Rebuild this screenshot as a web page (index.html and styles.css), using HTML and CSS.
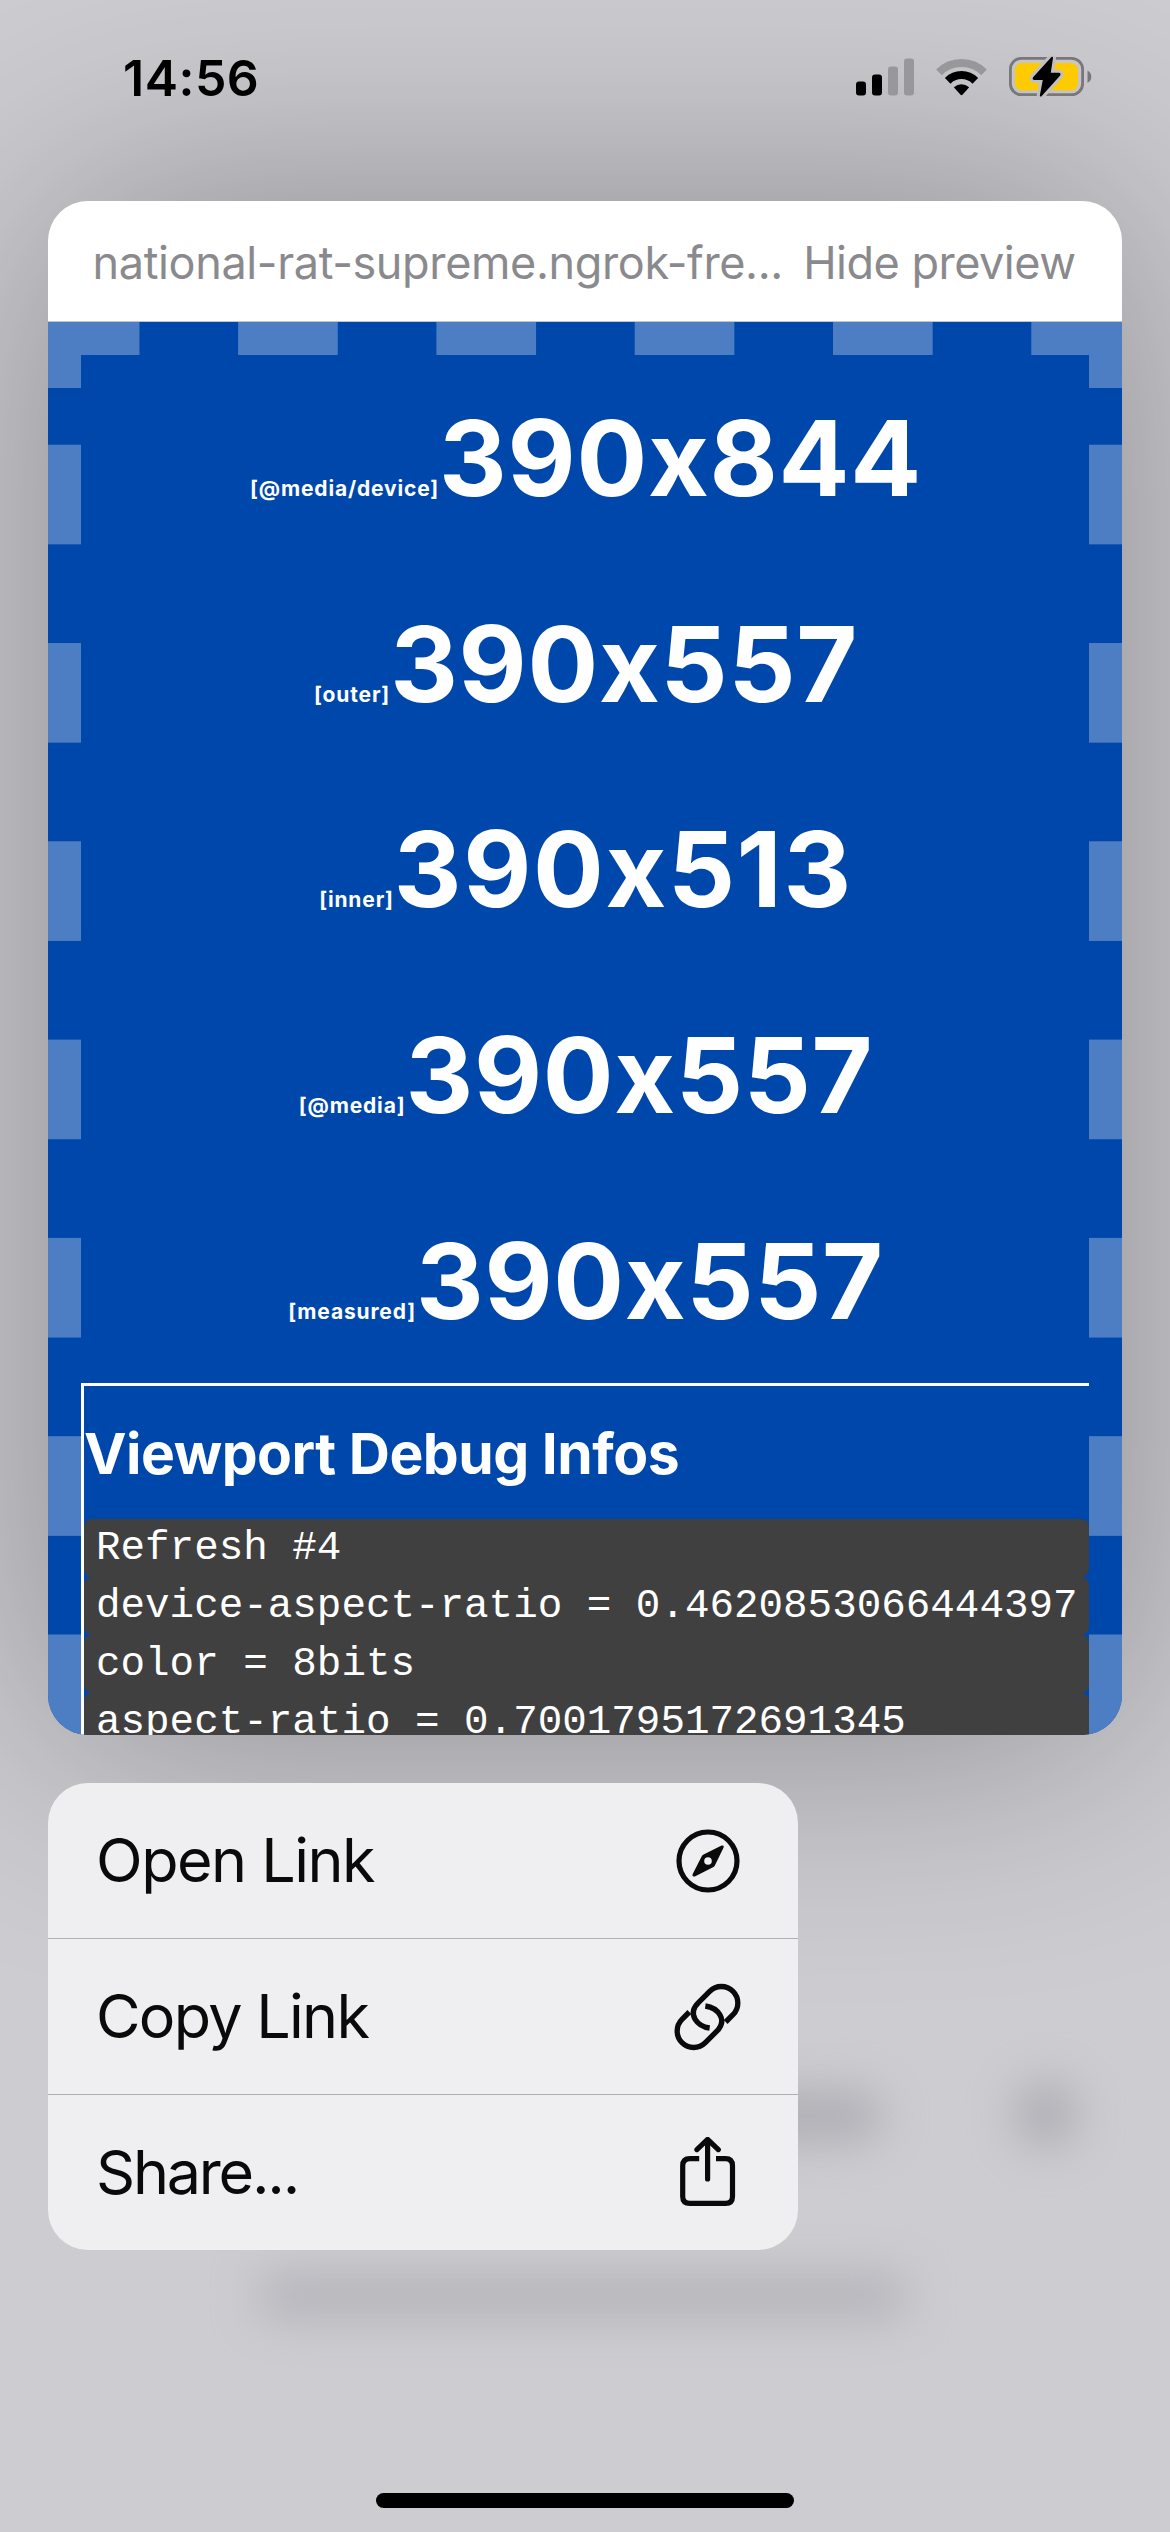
FILE: index.html
```html
<!DOCTYPE html>
<html lang="en">
<head>
<meta charset="utf-8">
<title>Link preview</title>
<link rel="stylesheet" href="styles.css">
</head>
<body>
<div class="screen">
  <div class="backdrop">
    <span class="blob blob-label"></span>
    <span class="blob blob-dot"></span>
    <span class="blob blob-caption"></span>
  </div>

  <header class="status">
    <span class="time">14:56</span>
    <span class="indicators">
      <svg class="signal" width="58" height="38" viewBox="0 0 58 38">
        <rect x="0" y="23.5" width="10" height="14" rx="3"/>
        <rect x="16" y="16.5" width="10" height="21" rx="3"/>
        <rect class="dim" x="32" y="8.5" width="10" height="29" rx="3"/>
        <rect class="dim" x="48" y="0.5" width="10" height="37" rx="3"/>
      </svg>
      <svg class="wifi" width="51" height="38" viewBox="0 0 51 38">
        <path class="arc dim-arc" d="M3 14.3 A32 32 0 0 1 48 14.3"/>
        <path class="arc" d="M11.7 22.8 A19.6 19.6 0 0 1 39.3 22.8"/>
        <path d="M17.8 29.3 Q25.5 23 33.2 29.3 L26.7 36.6 Q25.5 37.8 24.3 36.6 Z"/>
      </svg>
      <svg class="battery" width="83" height="42" viewBox="0 0 83 42">
        <rect class="shell" x="1.4" y="2.3" width="72.2" height="36.4" rx="11"/>
        <rect class="charge" x="6" y="7" width="63" height="27.5" rx="6.5"/>
        <path class="nub" d="M78.5 14.5 Q82.3 16.5 82.3 20.8 Q82.3 25 78.5 27 Z"/>
        <path class="bolt-gap" d="M43 1.8 L24.8 22 Q24.2 23 25.4 23 L35 23 L31.8 39.6 L50.4 18.8 Q51 17.8 49.8 17.8 L40.6 17.8 Z"/>
        <path class="bolt" d="M43 1.8 L24.8 22 Q24.2 23 25.4 23 L35 23 L31.8 39.6 L50.4 18.8 Q51 17.8 49.8 17.8 L40.6 17.8 Z"/>
      </svg>
    </span>
  </header>

  <section class="preview">
    <div class="preview-bar">
      <span class="url">national-rat-supreme.ngrok-fre...</span>
      <span class="hide">Hide preview</span>
    </div>
    <div class="page">
      <div class="size"><small>[@media/device]</small><b>390x844</b></div>
      <div class="size"><small>[outer]</small><b>390x557</b></div>
      <div class="size size-inner"><small>[inner]</small><b>390x513</b></div>
      <div class="size"><small>[@media]</small><b>390x557</b></div>
      <div class="size"><small>[measured]</small><b>390x557</b></div>
      <div class="debug">
        <h2>Viewport Debug Infos</h2>
        <code>Refresh #4</code>
        <code>device-aspect-ratio = 0.4620853066444397</code>
        <code>color = 8bits</code>
        <code>aspect-ratio = 0.7001795172691345</code>
      </div>
    </div>
  </section>

  <nav class="menu">
    <a class="item"><span class="t-open">Open Link</span>
      <svg width="72" height="72" viewBox="0 0 72 72">
        <circle class="line" cx="36" cy="36" r="29"/>
        <path fill-rule="evenodd" d="M49.6 20.6 Q52.4 19.8 51.6 22.6 L43 40.2 Q42.3 41.6 41 42.3 L22.8 51.4 Q19.8 52.2 20.6 49.2 L29.6 31.6 Q30.3 30.3 31.6 29.6 Z M36 32.2 A3.8 3.8 0 1 0 36 39.8 A3.8 3.8 0 1 0 36 32.2 Z"/>
      </svg></a>
    <a class="item"><span class="t-copy">Copy Link</span>
      <svg width="72" height="72" viewBox="21 18 216 216">
        <path class="line chain" d="M134 159 C98 154 64 118 101 82 L134 49 A49 49 0 0 1 204 119 L182 141"/>
        <path class="line chain" transform="rotate(180 127.5 126)" d="M134 159 C98 154 64 118 101 82 L134 49 A49 49 0 0 1 204 119 L182 141"/>
      </svg></a>
    <a class="item"><span class="t-share">Share...</span>
      <svg width="72" height="72" viewBox="0 0 72 72">
        <path class="line" d="M27.2 21.6 H18 Q10.7 21.6 10.7 28.8 V59.4 Q10.7 66.4 18 66.4 H53.5 Q60.5 66.4 60.5 59.4 V28.8 Q60.5 21.6 53.5 21.6 H44"/>
        <path class="line round" d="M35.6 42 V2.6 M24.9 12.6 L35.6 2.4 L46.3 12.6"/>
      </svg></a>
  </nav>

  <div class="home"></div>
</div>
</body>
</html>
```

FILE: styles.css
```css
* { box-sizing: border-box; }

body {
  margin: 0;
  font-family: Inter, "Liberation Sans", sans-serif;
}

.screen {
  position: relative;
  width: 1170px;
  height: 2532px;
  overflow: hidden;
  background: #cdccd1;
  display: flex;
  flex-direction: column;
  isolation: isolate;
}

.backdrop {
  position: absolute;
  inset: 0;
  z-index: -1;
}

.blob {
  position: absolute;
  background: #aeaeb4;
  filter: blur(22px);
}

.blob-label { left: 560px; top: 2090px; width: 322px; height: 52px; border-radius: 26px; }
.blob-dot { left: 1014px; top: 2080px; width: 64px; height: 68px; border-radius: 50%; }
.blob-caption { left: 258px; top: 2272px; width: 650px; height: 48px; border-radius: 20px; background: #b5b5bb; }

.status {
  height: 201px;
  flex: none;
  display: flex;
  justify-content: space-between;
  align-items: flex-start;
  padding: 48px 78px 0 123px;
  z-index: 1;
}

.time {
  font-size: 50px;
  line-height: 60px;
  font-weight: 600;
  letter-spacing: 0.5px;
}

.indicators { display: flex; padding-top: 8px; }
.signal { margin: 2px 22px 0 0; }
.wifi { margin: 2px 22px 0 0; }
.dim { fill: #98989b; }
.arc { fill: none; stroke: #000; stroke-width: 8; }
.dim-arc { stroke: #98989b; }
.shell { fill: none; stroke: #78787b; stroke-width: 2.8; }
.charge { fill: #fecb00; }
.nub { fill: #78787b; }
.bolt-gap { fill: #c0c0c3; stroke: #c0c0c3; stroke-width: 8; stroke-linejoin: round; }
.bolt { stroke: #000; stroke-width: 2; stroke-linejoin: round; }

.preview {
  width: 1074px;
  height: 1534px;
  margin: 0 48px;
  flex: none;
  display: flex;
  flex-direction: column;
  border-radius: 40px;
  overflow: hidden;
  box-shadow: 0 0 300px rgba(0, 0, 0, 0.32);
}

.preview-bar {
  height: 121px;
  flex: none;
  background: #fff;
  border-bottom: 1px solid #c6c6c8;
  display: flex;
  justify-content: space-between;
  align-items: center;
  padding: 2px 46.5px 0 44.5px;
  font-size: 45px;
  color: #8a8a8e;
  white-space: nowrap;
}

.url { letter-spacing: -0.36px; }
.hide { letter-spacing: -0.5px; }

.page {
  flex: 1;
  min-height: 0;
  overflow: hidden;
  padding: 33px 33px 0;
  color: #fff;
  background:
    linear-gradient(#4d7ec4, #4d7ec4) 0 0 / 33px 66px no-repeat,
    linear-gradient(#4d7ec4, #4d7ec4) 100% 0 / 33px 66px no-repeat,
    linear-gradient(90deg, #4d7ec4 50%, transparent 0) -8.2px 0 / 198.3px 33px repeat-x,
    linear-gradient(#4d7ec4 50%, transparent 0) 0 -75.6px / 33px 198.3px repeat-y,
    linear-gradient(#4d7ec4 50%, transparent 0) 100% -75.6px / 33px 198.3px repeat-y,
    #0047ab;
}

.size {
  height: 205.7px;
  padding-left: 2px;
  font-size: 105px;
  line-height: 205.7px;
  text-align: center;
  white-space: nowrap;
  font-feature-settings: "calt" 0;
}

.size small {
  font-size: 21px;
  line-height: 1;
  font-weight: 700;
  letter-spacing: 0.85px;
}

.size b { font-weight: 700; letter-spacing: 0.7px; }
.size-inner b { letter-spacing: 1.6px; }

.debug {
  border: solid #fff;
  border-width: 3px 0 0 3px;
}

.debug h2 {
  margin: 0;
  height: 133px;
  font-size: 57px;
  line-height: 135px;
  font-weight: 700;
  letter-spacing: -0.5px;
  white-space: nowrap;
}

.debug code {
  display: block;
  height: 57.7px;
  padding-left: 12px;
  border-radius: 8px;
  background: #404040;
  font: 40.9px/59px "Liberation Mono", monospace;
  white-space: pre;
}

.menu {
  width: 750px;
  height: 467px;
  margin: 48px 0 0 48px;
  flex: none;
  display: flex;
  flex-direction: column;
  border-radius: 40px;
  overflow: hidden;
  background: #efeff1;
  color: #0a0a0a;
  z-index: 1;
}

.item {
  flex: 1;
  display: flex;
  justify-content: space-between;
  align-items: center;
  padding: 0 54px 0 48px;
  font-size: 61px;
  white-space: nowrap;
}

.item span { padding-bottom: 2px; }
.item + .item { border-top: 1px solid #b0b0b2; }

.t-open { letter-spacing: -1.5px; }
.t-copy { letter-spacing: -1.7px; }
.t-share { letter-spacing: -2.2px; }

.item svg { fill: #0a0a0a; }
.item .line { fill: none; stroke: #0a0a0a; stroke-width: 5.2; }
.item .chain { stroke-width: 16; }
.item .round { stroke-linecap: round; stroke-linejoin: round; }

.home {
  width: 418px;
  height: 15px;
  margin: auto auto 24px;
  border-radius: 8px;
  background: #000;
}
```
